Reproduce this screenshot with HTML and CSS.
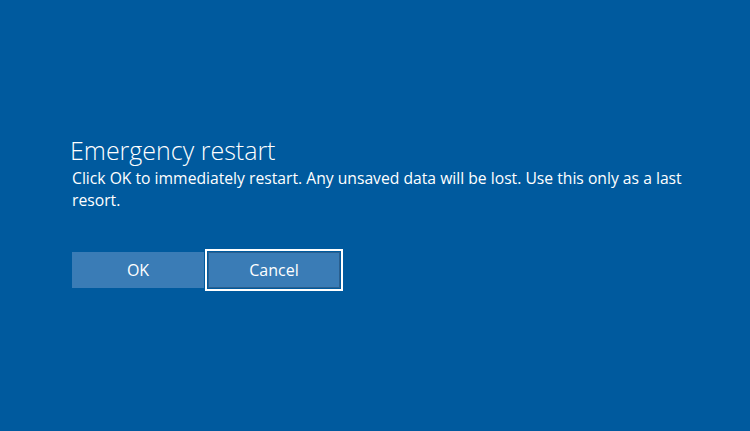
FILE: index.html
```html
<!DOCTYPE html>
<html>
<head>
<meta charset="utf-8">
<link rel="stylesheet" href="styles.css">
</head>
<body>
<main class="screen">
  <section class="dialog">
    <h1 class="title">Emergency restart</h1>
    <p class="message">Click OK to immediately restart. Any unsaved data will be lost. Use this only as a last resort.</p>
    <div class="actions">
      <button class="btn">OK</button>
      <button class="btn focused">Cancel</button>
    </div>
  </section>
</main>
</body>
</html>
```
FILE: styles.css
```css
html, body {
  margin: 0;
  padding: 0;
  height: 100%;
}
body {
  background: #005a9e;
  font-family: "Segoe UI", "Open Sans", "Noto Sans", sans-serif;
  color: #ffffff;
}
.screen {
  height: 100%;
  box-sizing: border-box;
  padding: 134px 0 0 72px;
}
.dialog {
  width: 650px;
}
.title {
  margin: 0 0 0 -2px;
  font-size: 25px;
  font-weight: 300;
  line-height: 33px;
}
.message {
  margin: 0;
  font-size: 15.7px;
  line-height: 22px;
}
.actions {
  display: flex;
  gap: 4px;
  margin-top: 41px;
}
.btn {
  width: 132px;
  height: 36px;
  border: none;
  background: #3a7cb6;
  color: #ffffff;
  font-family: inherit;
  font-size: 16px;
  padding: 0;
}
.focused {
  box-shadow: inset 0 0 0 1px #2a5f8f;
  outline: 2px solid #ffffff;
  outline-offset: 1px;
}
```
